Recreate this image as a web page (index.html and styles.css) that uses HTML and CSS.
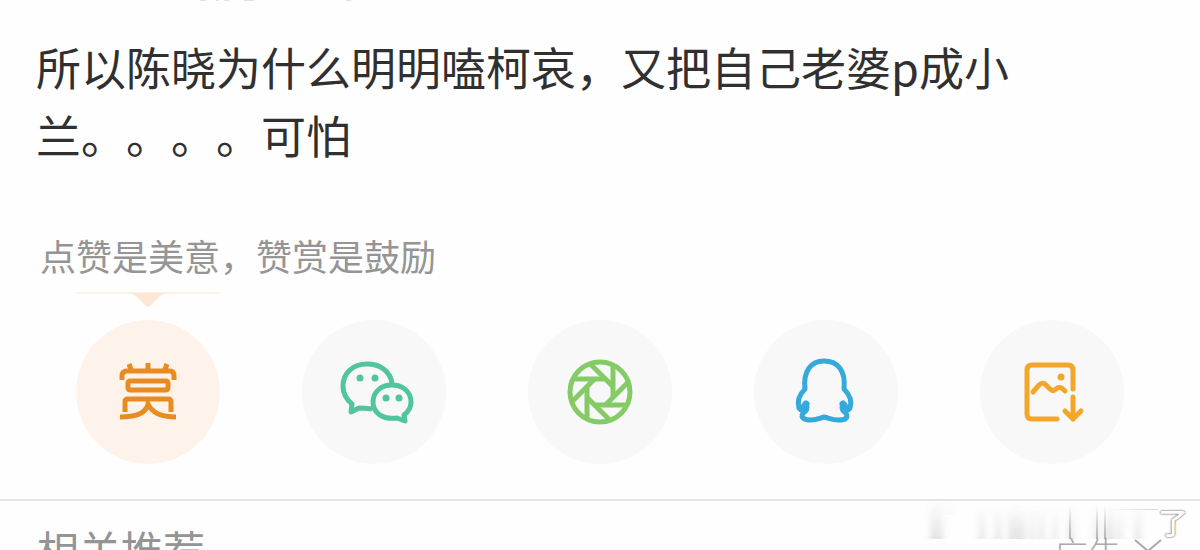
FILE: index.html
```html
<!DOCTYPE html>
<html lang="zh-CN">
<head>
<meta charset="utf-8">
<meta name="viewport" content="width=device-width, initial-scale=1">
<title>赞赏</title>
<link rel="stylesheet" href="styles.css">
</head>
<body>
<main class="post">
  <svg class="previous" width="220" height="2" viewBox="0 0 220 2" aria-hidden="true"><path d="M20 0h6M36 0h3M44 0h5M64 0h10M166 0h5" stroke="#e2e2e2" stroke-width="2"/></svg>
  <h1 class="title">所以陈晓为什么明明嗑柯哀，又把自己老婆p成小<br>兰。。。。可怕</h1>
  <p class="hint">点赞是美意，赞赏是鼓励</p>
  <div class="actions">
    <button class="action reward" type="button" aria-label="赞赏">
      <svg class="pointer" width="144" height="16" viewBox="0 0 144 16"><path d="M0 1h144" stroke="#fdf1e8" stroke-width="2"/><path d="M54 1H90Q86 2 83 5L74 14Q72 15 70 14L61 5Q58 2 54 1Z" fill="#fde6d5"/></svg>
      <svg class="icon" viewBox="0 0 144 144" fill="none" stroke="#e88c22" stroke-width="5"><path d="M46 60V56Q46 51 51 51H94Q98 51 98 56V60M53 44l3 8M72 43v8M91 44l-3 8"/><rect x="52" y="61" width="40" height="9" rx="2"/><path d="M49 92V82Q49 79 52 79H92Q95 79 95 82V92M44 97C58 97 70 94 72 84C76 93 86 97 100 97"/></svg>
    </button>
    <button class="action" type="button" aria-label="微信">
      <svg class="icon" viewBox="0 0 144 144" fill="none" stroke="#52c59d" stroke-width="5" stroke-linejoin="round"><path d="M70 89Q62 88 57 88L49 92L50 84C44 79 41 74 41 66C41 53 51 44 65 44C78 44 88 51 90 63"/><path d="M90 65C101 65 109 72 109 82C109 88 106 92 102 95L103 101L95 98C81 100 71 93 71 82C71 72 79 65 90 65Z"/><g fill="#52c59d" stroke="none"><circle cx="58" cy="58" r="3.5"/><circle cx="73" cy="58" r="3.5"/><circle cx="84" cy="78" r="3.5"/><circle cx="97" cy="78" r="3.5"/></g></svg>
    </button>
    <button class="action" type="button" aria-label="朋友圈">
      <svg class="icon" viewBox="0 0 144 144" fill="none" stroke="#84cb66" stroke-width="5"><circle cx="72" cy="72" r="30"/><path d="M45 59H78"/><path d="M45 59H78" transform="rotate(45 72 72)"/><path d="M45 59H78" transform="rotate(90 72 72)"/><path d="M45 59H78" transform="rotate(135 72 72)"/><path d="M45 59H78" transform="rotate(180 72 72)"/><path d="M45 59H78" transform="rotate(225 72 72)"/><path d="M45 59H78" transform="rotate(270 72 72)"/><path d="M45 59H78" transform="rotate(315 72 72)"/></svg>
    </button>
    <button class="action" type="button" aria-label="QQ">
      <svg class="icon" viewBox="0 0 144 144" fill="none" stroke="#35a9dc" stroke-width="5" stroke-linejoin="round" stroke-linecap="round"><path d="M51 69C49 51 57 41 70 41C84 41 92 51 90 69C96 75 98 82 96 88Q94 91 91 89L88 87Q88 91 92 93C95 99 90 100 84 100C78 100 75 98 70 97C66 98 63 100 57 100C51 100 46 98 49 93Q53 91 53 87L50 89Q47 91 45 88C43 81 45 75 51 69Z"/><path d="M49 88l3-4M92 88l-3-4" stroke-width="7"/></svg>
    </button>
    <button class="action" type="button" aria-label="保存图片">
      <svg class="icon" viewBox="0 0 144 144" fill="none" stroke="#f4a62a" stroke-width="5" stroke-linecap="round" stroke-linejoin="round"><path d="M77 99H52Q47 99 47 94V50Q47 45 52 45H88Q93 45 93 50V69M53 72L59 65Q63 61 67 66L70 69Q73 72 76 69Q80 65 85 71M93 77V99M85 91L93 99L101 91"/><circle cx="81" cy="57" r="3.5" fill="#f4a62a" stroke="none"/></svg>
    </button>
  </div>
</main>
<section class="related">
  <h2 class="related-title">相关推荐</h2>
  <button class="ad" type="button" aria-label="广告 关闭"><span>广告</span><svg class="close" width="28" height="24" viewBox="0 0 28 24"><path d="M1 1L27 23M27 1L1 23" stroke="#aaa" stroke-width="2"/></svg></button>
  <div class="watermark"><svg class="streaks" viewBox="0 0 240 38" aria-hidden="true">
    <defs><linearGradient id="fade" x1="0" y1="0" x2="0" y2="1"><stop offset="0" stop-color="#777" stop-opacity="0"/><stop offset="1" stop-color="#777" stop-opacity=".2"/></linearGradient><linearGradient id="line" x1="0" y1="0" x2="0" y2="1"><stop offset="0" stop-color="#777" stop-opacity="0"/><stop offset="1" stop-color="#777" stop-opacity=".5"/></linearGradient><linearGradient id="side"><stop offset="0" stop-color="#777" stop-opacity="0"/><stop offset="1" stop-color="#777" stop-opacity=".3"/></linearGradient><filter id="soft" x="-5%" width="110%" y="0" height="100%"><feGaussianBlur stdDeviation="3 0"/></filter></defs>
    <g fill="url(#fade)" filter="url(#soft)"><path d="M12 2h13v36H12zM29 0h4v14h-4z"/><path d="M61 4h6v34h-6zM77 4h6v34h-6zM90 4h17v34H90zM112 4h4v34h-4zM121 4h5v34h-5zM135 4h4v34h-4zM150 4h6v34h-6zM176 4h5v34h-5zM187 4h9v34h-9zM200 4h4v34h-4zM217 4h6v34h-6z"/></g>
    <path d="M151 4h2v34h-2zM178 4h2v34h-2zM186 4h2v34h-2z" fill="url(#line)"/><path d="M190 8h50v1h-50z" fill="url(#side)"/>
  </svg><span class="mark">了</span></div>
</section>
</body>
</html>
```
FILE: styles.css
```css
* { box-sizing: border-box; }
body {
  display: flex;
  flex-direction: column;
  height: 100vh;
  margin: 0;
  overflow: hidden;
  background: #fefefe;
  color: #303030;
  font-family: "Noto Sans CJK SC", sans-serif;
  text-spacing-trim: space-all;
}
.post { flex: none; padding-bottom: 35px; }
.previous { display: block; margin-left: 180px; }
.title {
  margin: 0;
  padding: 31px 36px 0;
  font-size: 45px;
  font-weight: 400;
  line-height: 68px;
}
.hint {
  margin: 0;
  padding: 60px 40px 0;
  color: #959595;
  font-size: 36px;
  line-height: 52px;
}
.actions {
  display: flex;
  justify-content: space-between;
  padding: 39px 76px 0;
}
.action {
  position: relative;
  width: 144px;
  height: 144px;
  padding: 0;
  border: 0;
  border-radius: 50%;
  background: #f8f8f9;
}
.reward { background: #fef3ea; }
.icon { display: block; width: 100%; height: 100%; }
.pointer { position: absolute; left: 0; top: -28px; }
.related {
  display: flex;
  position: relative;
  flex: none;
  align-items: flex-start;
  justify-content: space-between;
  padding: 18px 38px 0 37px;
  border-top: 2px solid #e4e4e4;
}
.related-title {
  margin: 0;
  color: #949494;
  font-size: 42px;
  font-weight: 400;
  line-height: 60px;
}
.ad {
  display: flex;
  align-items: flex-start;
  gap: 12px;
  margin-top: 8px;
  padding: 0;
  border: 0;
  background: none;
  color: #aaa;
  font: 300 34px/52px "Noto Sans CJK SC", sans-serif;
}
.close { margin-top: 12px; }
.watermark {
  display: flex;
  position: absolute;
  top: 0;
  right: 12px;
  align-items: flex-start;
}
.streaks { width: 240px; height: 38px; }
.mark {
  color: #fff;
  font-size: 30px;
  font-weight: 500;
  line-height: 40px;
  text-shadow: 0 0 2px #666, 0 0 2px #888;
}
```
